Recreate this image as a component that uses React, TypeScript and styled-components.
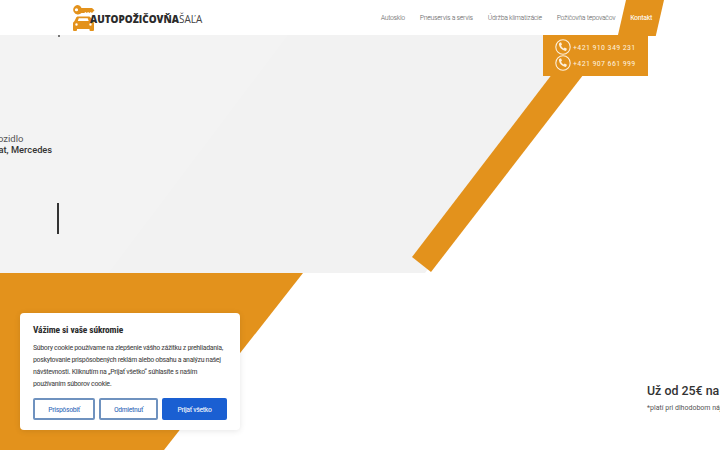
import React from "react";
import styled, { createGlobalStyle } from "styled-components";

const ORANGE = "#e3921c";

const GlobalStyle = createGlobalStyle`
  html, body {
    margin: 0;
    padding: 0;
    height: 450px;
    overflow: hidden;
    background: #fff;
    font-family: "Roboto", "Liberation Sans", sans-serif;
  }
  * { box-sizing: border-box; }
`;

const Page = styled.div`
  position: relative;
  width: 720px;
  height: 450px;
  overflow: hidden;
  display: grid;
  grid-template-columns: 720px;
  grid-template-rows: 35px 238px 177px;
`;

const Header = styled.header`
  display: flex;
  align-items: center;
  padding: 0 68px 0 72px;
  background: #fff;
  position: relative;
  z-index: 3;
`;

const Logo = styled.a`
  display: flex;
  align-items: center;
  height: 35px;
`;

const LogoWord = styled.span`
  margin: 2px 0 0 -5px;
  font-family: "Open Sans", sans-serif;
  font-size: 9.95px;
  font-weight: 800;
  color: #2b2b2b;
  white-space: nowrap;
  position: relative;

  span {
    font-weight: 400;
    color: #444;
  }
`;

const Nav = styled.nav`
  margin-left: auto;
  display: flex;
  align-items: center;
  gap: 15px;
`;

const NavLink = styled.a<{ $active?: boolean }>`
  position: relative;
  display: block;
  font-size: 8px;
  font-weight: ${(p) => (p.$active ? 400 : 300)};
  font-stretch: 75%;
  letter-spacing: -0.36px;
  white-space: nowrap;
  color: ${(p) => (p.$active ? "#fff" : "#666")};

  ${(p) =>
    p.$active &&
    `
    &::before {
      content: "";
      position: absolute;
      z-index: -1;
      top: -14px;
      bottom: -14px;
      left: -8px;
      right: -8px;
      background: ${ORANGE};
      transform: skewX(-12.9deg);
    }
  `}
`;

const Hero = styled.section`
  position: relative;
  background: linear-gradient(127deg, #f3f3f3 0 32%, #f2f2f2 32% 100%);
  clip-path: polygon(0 0, 600px 0, 425px 100%, 0 100%);
  overflow: hidden;
`;

/* tail of a heading that sits under the header in the original */
const HeadingTail = styled.div`
  width: 2px;
  height: 2px;
  margin-left: 58px;
  background: #777;
`;

const HeroLead = styled.p`
  margin: 96px 0 0 -45px;
  font-size: 9.5px;
  line-height: 11px;
  color: #555;
  white-space: nowrap;
`;

const HeroStrong = styled.p`
  margin: 0 0 0 -9px;
  font-size: 9.3px;
  line-height: 11px;
  font-weight: 500;
  color: #333;
  white-space: nowrap;
`;

const Caret = styled.div`
  width: 2px;
  height: 31px;
  margin: 48px 0 0 57px;
  background: #333;
`;

const Strip = styled.div`
  position: absolute;
  top: 35px;
  left: 412px;
  width: 240px;
  height: 238px;
  background: ${ORANGE};
  clip-path: polygon(170px 0, 202px 0, 19px 237px, 0 222px);
  z-index: 1;
`;

const PhoneBox = styled.div`
  position: absolute;
  top: 35px;
  left: 543px;
  width: 105px;
  height: 41px;
  padding: 4px 0 0 12px;
  background: ${ORANGE};
  display: flex;
  flex-direction: column;
  z-index: 2;
`;

const PhoneRow = styled.div`
  display: flex;
  align-items: center;
  gap: 2px;
  height: 16px;
  font-size: 8px;
  font-stretch: 75%;
  letter-spacing: 0.36px;
  color: #fdf0dc;
  white-space: nowrap;
`;

const Lower = styled.section`
  position: relative;
  background: #fff;
  display: flex;
  padding: 110px 0 0 647px;

  &::before {
    content: "";
    position: absolute;
    inset: 0 auto 0 0;
    width: 303px;
    background: ${ORANGE};
    clip-path: polygon(0 0, 100% 0, 164px 100%, 0 100%);
  }
`;

const Promo = styled.div`
  white-space: nowrap;
`;

const PromoTitle = styled.h3`
  margin: 0;
  font-size: 12.4px;
  line-height: 15px;
  font-weight: 500;
  color: #333;
`;

const PromoNote = styled.p`
  margin: 6px 0 0;
  font-size: 7px;
  line-height: 9px;
  color: #555;
`;

const CookieCard = styled.div`
  position: absolute;
  left: 20px;
  top: 313px;
  width: 220px;
  height: 117px;
  padding: 10px 13px 0;
  background: #fff;
  border-radius: 4px;
  box-shadow: 0 1px 6px rgba(0, 0, 0, 0.1);
  z-index: 4;
`;

const CookieTitle = styled.h4`
  margin: 0;
  font-size: 9.4px;
  line-height: 13px;
  font-weight: 700;
  font-stretch: 75%;
  letter-spacing: -0.12px;
  color: #2a2a2a;
`;

const CookieText = styled.p`
  margin: 6px 0 0;
  font-size: 8px;
  line-height: 12px;
  font-stretch: 75%;
  letter-spacing: -0.37px;
  white-space: nowrap;
  color: #444;
`;

const CookieActions = styled.div`
  display: grid;
  grid-template-columns: 62px 59px 65px;
  gap: 4px;
  margin-top: 8px;
`;

const CookieButton = styled.button<{ $primary?: boolean }>`
  height: 22px;
  padding: 0;
  border-radius: 2px;
  border: 2px solid ${(p) => (p.$primary ? "#1a5fd2" : "#6f92bf")};
  background: ${(p) => (p.$primary ? "#1a5fd2" : "#fff")};
  color: ${(p) => (p.$primary ? "#fff" : "#2f68b8")};
  font-family: inherit;
  font-size: 7.8px;
  font-stretch: 75%;
  letter-spacing: -0.35px;
`;

const LogoMark = () => (
  <svg width="23" height="26" viewBox="0 0 23 26" fill={ORANGE}>
    <path
      fillRule="evenodd"
      d="M5 0a4.800 4.800 0 0 1 4.500 3H20l2.500 2.200L20 8l-1.300-1-1.300 1-1.300-1-1.300 1-1.300-1-1.300 1H9.500A4.800 4.800 0 1 1 5 0zM4.500 3.200a1.600 1.500 0 1 0 0 3 1.600 1.500 0 0 0 0-3z"
    />
    <path
      fillRule="evenodd"
      d="M6 11.500h10.500c1.200 0 2 .6 2.500 1.600l1.500 3 1.500 1.600V25a1 1 0 0 1-1 1h-2.500a1 1 0 0 1-1-1v-1H5v1a1 1 0 0 1-1 1H2a1 1 0 0 1-1-1v-7.300L2.500 16 4 13c.4-1 1-1.500 2-1.500zM6.800 13.300 5.800 16h10.900l-1-2.700zM4.500 18.300a1.200 1.200 0 1 0 0 2.400 1.200 1.200 0 0 0 0-2.400zm14 0a1.200 1.200 0 1 0 0 2.400 1.200 1.200 0 0 0 0-2.400z"
    />
  </svg>
);

const PhoneIcon = () => (
  <svg width="16" height="16" viewBox="0 0 16 16" fill="none">
    <circle cx="8" cy="8" r="7.2" stroke="#fdf0dc" strokeWidth="1.1" />
    <path
      d="M4.600 3.700 6 3.300l1 2.300-.9.800c.4 1.300 1.300 2.300 2.700 3l.9-.8 2.200 1.200-.5 1.400c-.3.600-1 .8-1.700.6C6.600 11 4.500 8.800 3.900 5.600c-.1-.8.200-1.500.7-1.900z"
      fill="#fdf0dc"
    />
  </svg>
);

const phones = ["+421 910 349 231", "+421 907 661 999"];
const links = ["Autosklo", "Pneuservis a servis", "Údržba klimatizácie", "Požičovňa tepovačov"];

const App = () => {
  return (
    <Page>
      <GlobalStyle />
      <Header>
        <Logo>
          <LogoMark />
          <LogoWord>
            AUTOPOŽIČOVŇA<span>ŠAĽA</span>
          </LogoWord>
        </Logo>
        <Nav>
          {links.map((l) => (
            <NavLink key={l}>{l}</NavLink>
          ))}
          <NavLink $active>Kontakt</NavLink>
        </Nav>
      </Header>
      <Hero>
        <HeadingTail />
        <HeroLead>Úžitkové vozidlo</HeroLead>
        <HeroStrong>Fiat, Mercedes</HeroStrong>
        <Caret />
      </Hero>
      <Strip />
      <PhoneBox>
        {phones.map((p) => (
          <PhoneRow key={p}>
            <PhoneIcon />
            {p}
          </PhoneRow>
        ))}
      </PhoneBox>
      <Lower>
        <Promo>
          <PromoTitle>Už od 25€ na deň</PromoTitle>
          <PromoNote>*platí pri dlhodobom nájme</PromoNote>
        </Promo>
      </Lower>
      <CookieCard>
        <CookieTitle>Vážime si vaše súkromie</CookieTitle>
        <CookieText>
          Súbory cookie používame na zlepšenie vášho zážitku z prehliadania,
          <br />
          poskytovanie prispôsobených reklám alebo obsahu a analýzu našej
          <br />
          návštevnosti. Kliknutím na „Prijať všetko“ súhlasíte s naším
          <br />
          používaním súborov cookie.
        </CookieText>
        <CookieActions>
          <CookieButton>Prispôsobiť</CookieButton>
          <CookieButton>Odmietnuť</CookieButton>
          <CookieButton $primary>Prijať všetko</CookieButton>
        </CookieActions>
      </CookieCard>
    </Page>
  );
};

export default App;
